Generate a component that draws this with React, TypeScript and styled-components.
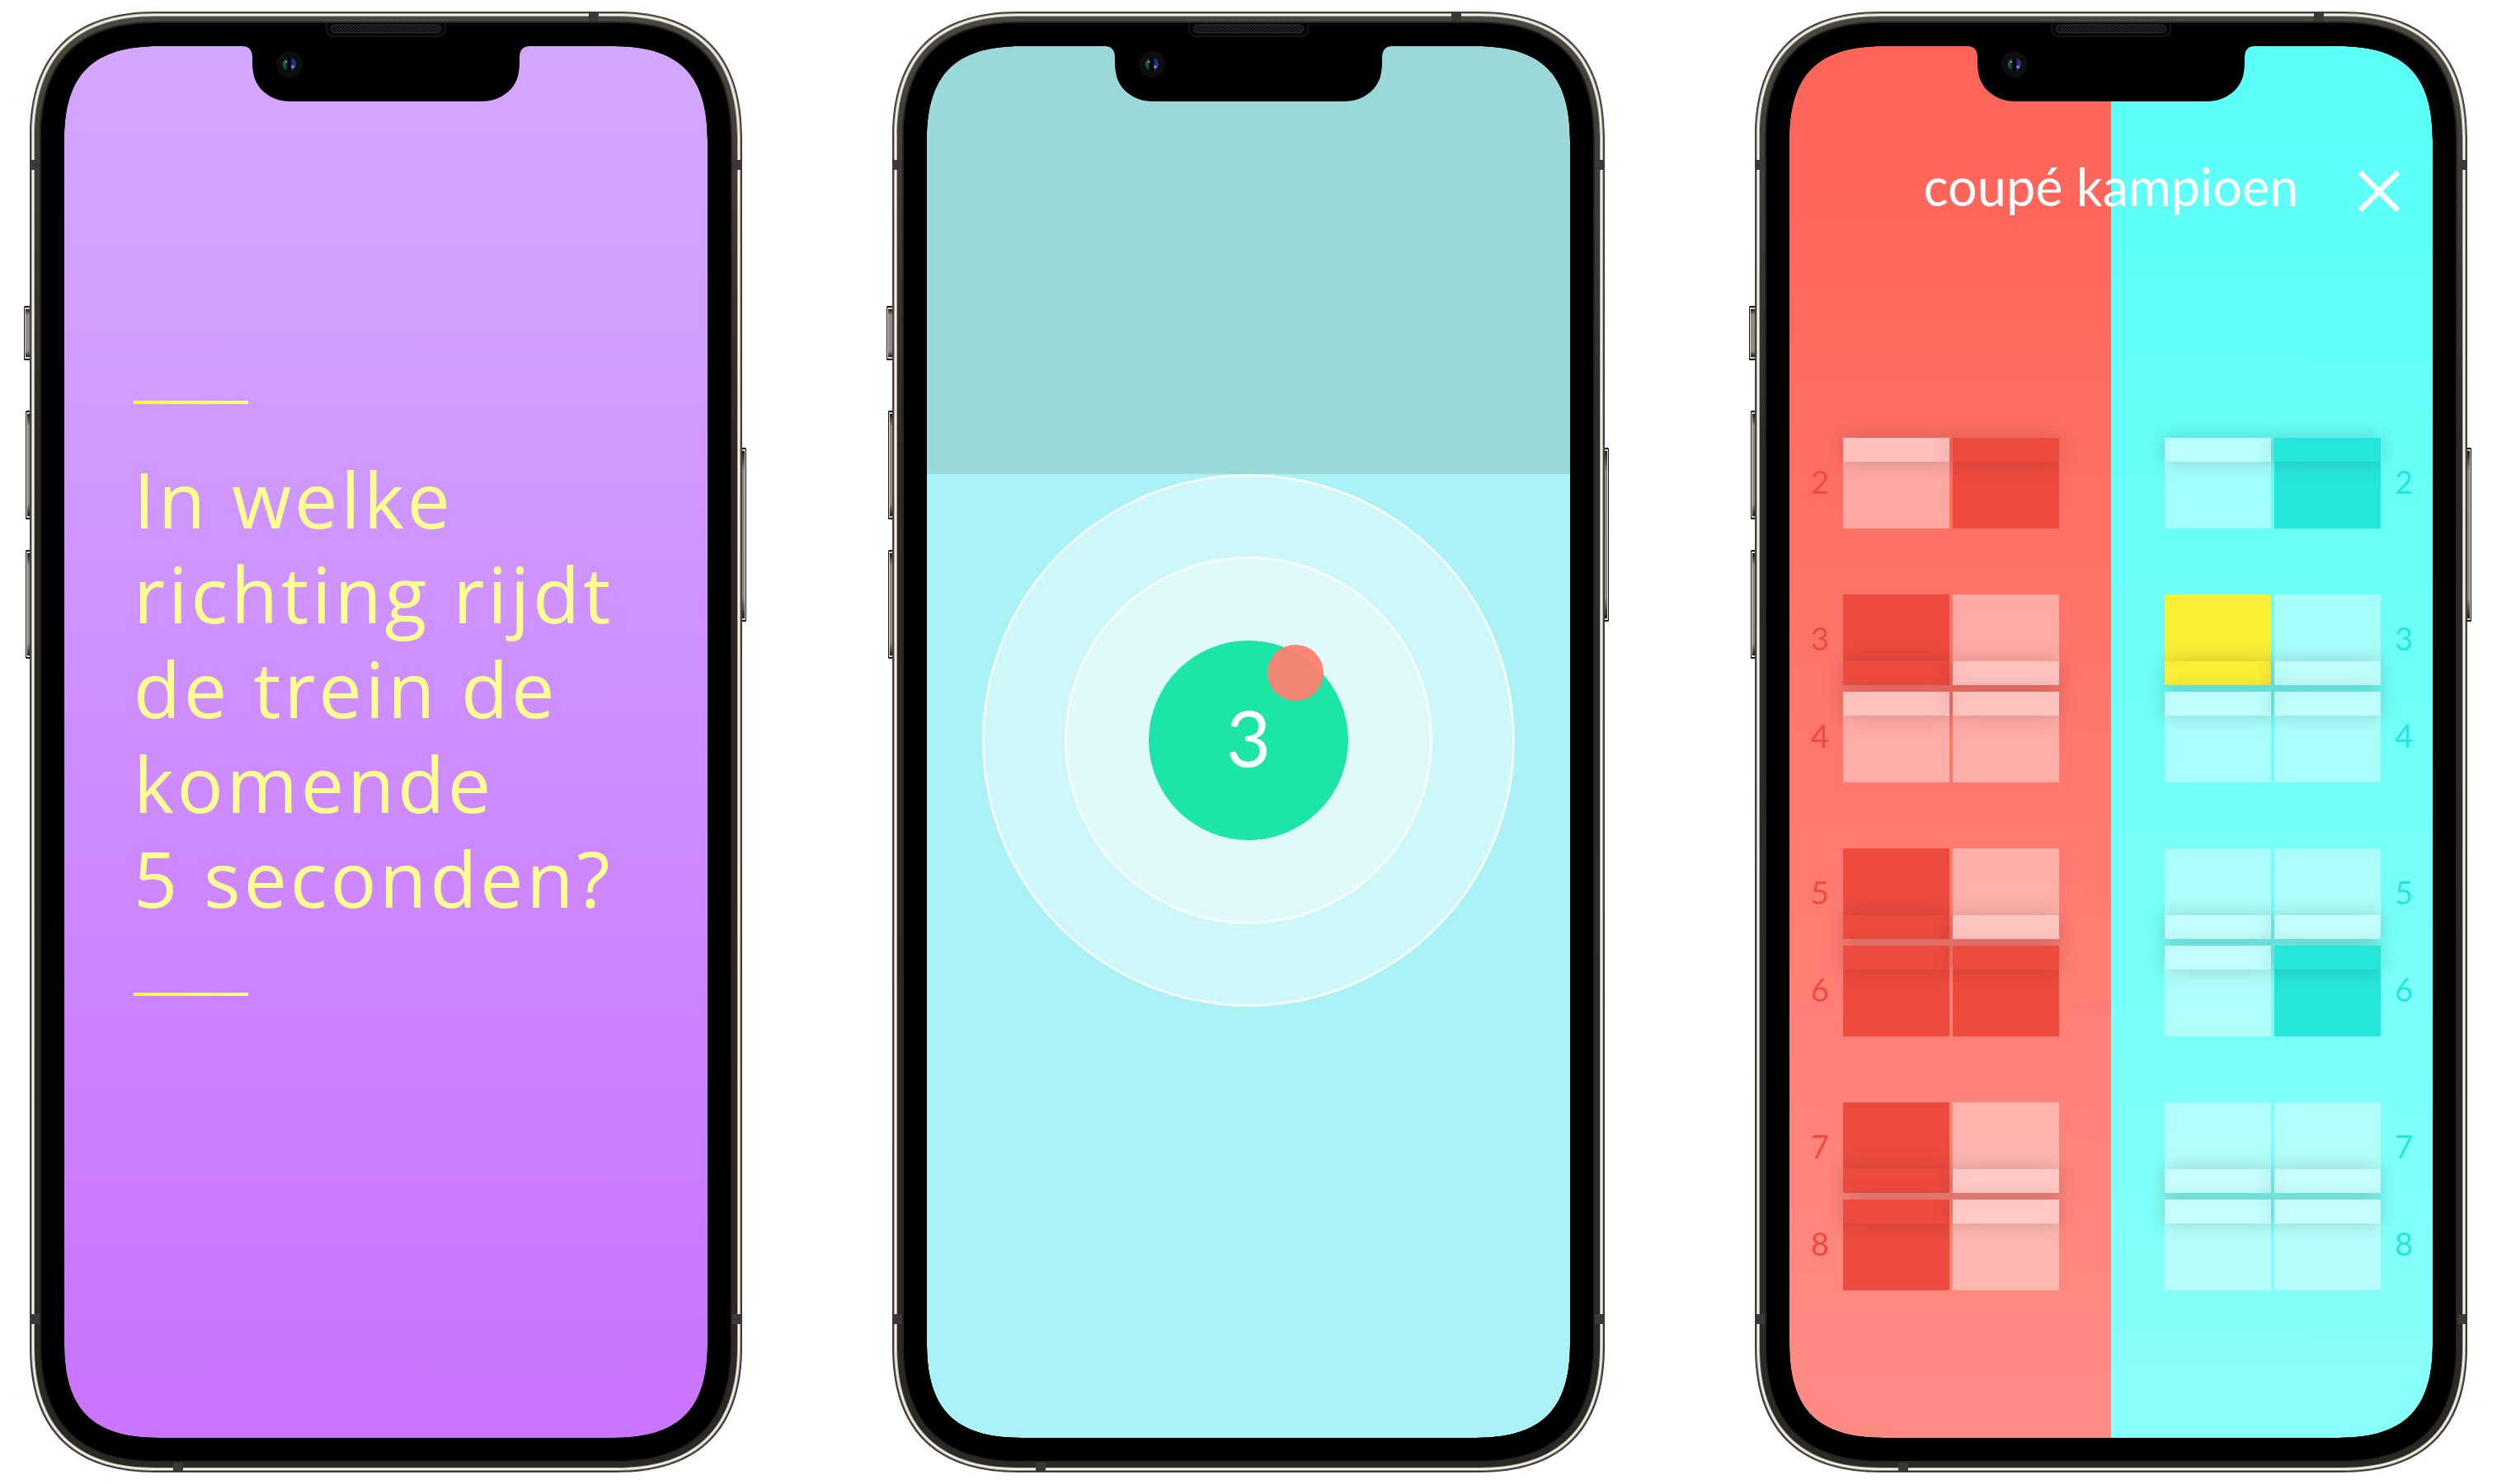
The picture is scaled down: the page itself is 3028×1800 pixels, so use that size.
import React from "react";
import styled, { createGlobalStyle, css } from "styled-components";

const GlobalStyle = createGlobalStyle`
  *, *::before, *::after { box-sizing: border-box; }
  body { margin: 0; background: #ffffff; }
`;

const Page = styled.main`
  display: flex;
  justify-content: space-between;
  gap: 182px;
  padding: 14px 36px;
`;

/* ---------- device ---------- */

const Device = styled.section`
  position: relative;
  display: flex;
  flex: 1 1 0;
  min-width: 0;
  aspect-ratio: 864 / 1772;
  padding: 42px;
`;

const Screen = styled.div`
  display: flex;
  flex: 1;
  flex-direction: column;
  min-width: 0;
  overflow: hidden;
  border-radius: 88px;
`;

const Hardware = styled.svg`
  position: absolute;
  inset: 0;
  width: 100%;
  height: 100%;
  overflow: visible;
  pointer-events: none;
`;

const W = 864;
const H = 1772;

/* Continuous-curvature rounded rectangle, inset from the device outline. */
function outline(inset: number): string {
  const reach = 152 - inset * 0.9;
  const pull = (8 * (38.5 - inset * 0.27) - reach) / 3;
  const l = inset;
  const t = inset;
  const r = W - inset;
  const b = H - inset;
  return [
    `M${l} ${t + reach}`,
    `C${l} ${t + pull} ${l + pull} ${t} ${l + reach} ${t}`,
    `H${r - reach}`,
    `C${r - pull} ${t} ${r} ${t + pull} ${r} ${t + reach}`,
    `V${b - reach}`,
    `C${r} ${b - pull} ${r - pull} ${b} ${r - reach} ${b}`,
    `H${l + reach}`,
    `C${l + pull} ${b} ${l} ${b - pull} ${l} ${b - reach}`,
    "Z",
  ].join(" ");
}

const hole = outline(42);

const layers = [
  { inset: 0, fill: "url(#rim)" },
  { inset: 2, fill: "#a9a79d" },
  { inset: 3, fill: "#f7f0e8" },
  { inset: 5, fill: "#b0aca2" },
  { inset: 6, fill: "url(#band)" },
  { inset: 12, fill: "#242422" },
  { inset: 14, fill: "#000000" },
];

function SideKey({ x, y, width, height, flip }: { x: number; y: number; width: number; height: number; flip?: boolean }) {
  return (
    <g>
      <rect x={x} y={y} width={width} height={height} rx={1.5} fill="#1b1b19" />
      <rect x={flip ? x : x + 1} y={y + 2} width={width - 1} height={height - 4} fill="#d8d6cd" />
      <rect x={flip ? x : x + 2} y={y + 4} width={width - 2} height={height - 8} fill="url(#key)" />
    </g>
  );
}

function PhoneHardware() {
  return (
    <Hardware viewBox={`0 0 ${W} ${H}`} aria-hidden="true">
      <defs>
        <linearGradient id="rim" x1="0" y1="0" x2="0" y2="1">
          <stop offset="0" stopColor="#45453f" />
          <stop offset="1" stopColor="#3c3b37" />
        </linearGradient>
        <linearGradient id="band" x1="0" y1="0" x2="0" y2="1">
          <stop offset="0" stopColor="#484740" />
          <stop offset="0.3" stopColor="#2b2a25" />
          <stop offset="1" stopColor="#2a2924" />
        </linearGradient>
        <linearGradient id="key" x1="0" y1="0" x2="0" y2="1">
          <stop offset="0" stopColor="#1b1b19" />
          <stop offset="0.12" stopColor="#8d8c85" />
          <stop offset="0.88" stopColor="#8d8c85" />
          <stop offset="1" stopColor="#1b1b19" />
        </linearGradient>
        <pattern id="mesh" width="4" height="4" patternUnits="userSpaceOnUse">
          <rect width="4" height="4" fill="#101010" />
          <rect width="2" height="2" fill="#222222" />
          <rect x="2" y="2" width="2" height="2" fill="#222222" />
        </pattern>
        <linearGradient id="lens" x1="0" y1="0" x2="1" y2="0">
          <stop offset="0" stopColor="#2b6d68" />
          <stop offset="0.3" stopColor="#0b2b2c" />
          <stop offset="0.36" stopColor="#000000" />
          <stop offset="0.58" stopColor="#02040d" />
          <stop offset="0.68" stopColor="#0f2d83" />
          <stop offset="1" stopColor="#303a70" />
        </linearGradient>
      </defs>

      <SideKey x={-7} y={357} width={8} height={66} />
      <SideKey x={-5} y={484} width={6} height={132} />
      <SideKey x={-5} y={653} width={6} height={132} />
      <SideKey x={863} y={529} width={6} height={211} flip />

      {layers.map((layer) => (
        <path key={layer.inset} d={`${outline(layer.inset)} ${hole}`} fillRule="evenodd" fill={layer.fill} />
      ))}

      <g fill="#3d3837">
        <rect x="0" y="180" width="12" height="12" />
        <rect x="852" y="180" width="12" height="12" />
        <rect x="0" y="1580" width="12" height="12" />
        <rect x="852" y="1580" width="12" height="12" />
        <rect x="678" y="0" width="12" height="12" />
        <rect x="174" y="1760" width="12" height="12" />
      </g>

      <path
        d="M258 40 V42 C266 42 270 47 270 56 C270 64 270 68 271 73 C273 93 292 109 316 109 H548 C572 109 591 93 593 73 C594 68 594 64 594 56 C594 47 598 42 606 42 V40Z"
        fill="#000000"
      />
      <path d="M359 13 Q360 14 360 16 V20 Q360 30 370 30 H494 Q504 30 504 20 V16 Q504 14 505 13" fill="none" stroke="#1c1c1c" strokeWidth="1.5" />
      <rect x="365" y="16" width="134" height="10" rx="5" fill="url(#mesh)" stroke="#2c2c2c" />
      <circle cx="315" cy="64" r="16" fill="#0d0d0d" />
      <circle cx="315" cy="64" r="8" fill="url(#lens)" />
      <circle cx="311" cy="61" r="1.2" fill="#57c3c4" />
      <circle cx="319" cy="67" r="1.8" fill="#a083c8" />
    </Hardware>
  );
}

/* ---------- question screen ---------- */

const QuestionScreen = styled(Screen)`
  gap: 56px;
  padding: 430px 84px 0;
  background: linear-gradient(180deg, #d4a7ff 0%, #d3a4ff 8%, #c976ff 92%, #c975ff 100%);
`;

const Rule = styled.hr`
  width: 139px;
  height: 4px;
  margin: 0;
  border: 0;
  background: linear-gradient(90deg, #fff848 0%, #ffff8c 100%);
`;

const Question = styled.h1`
  margin: 0;
  padding: 2px 0 25px;
  color: #ffff90;
  font: 400 93px/115px "Open Sans", "Noto Sans", sans-serif;
  letter-spacing: 4px;
`;

/* ---------- countdown screen ---------- */

const CountdownScreen = styled(Screen)`
  align-items: center;
  background: #aaf2f5;
`;

const Shade = styled.div`
  flex: none;
  align-self: stretch;
  height: 519px;
  background: #9bd8da;
`;

const Ring = styled.div<{ $size: number; $fill: string }>`
  display: flex;
  flex: none;
  align-items: center;
  justify-content: center;
  width: ${(p) => p.$size}px;
  height: ${(p) => p.$size}px;
  border: 3px solid rgba(255, 255, 255, 0.75);
  border-radius: 50%;
  background: ${(p) => p.$fill};
`;

const Counter = styled.div`
  position: relative;
  display: flex;
  align-items: center;
  justify-content: center;
  width: 242px;
  height: 242px;
  padding-bottom: 8px;
  border-radius: 50%;
  background: #1de5a8;
  color: #ffffff;
  font: 400 94px/112px Lato, "Open Sans", sans-serif;
`;

const Dot = styled.span`
  position: absolute;
  top: 5px;
  right: 30px;
  width: 68px;
  height: 68px;
  border-radius: 50%;
  background: rgba(255, 126, 112, 0.94);
`;

/* ---------- seats screen ---------- */

type Side = "left" | "right";
type SeatState = "free" | "taken" | "mine";

const SeatsScreen = styled(Screen)`
  background:
    linear-gradient(180deg, #ff6459 0%, #ff665b 12%, #ff8a81 94%, #ff8b82 100%) left / 50% 100% no-repeat,
    linear-gradient(180deg, #5bfff7 0%, #5dfff7 12%, #86fffa 94%, #88fffa 100%) right / 50% 100% no-repeat;
`;

const TitleBar = styled.header`
  display: grid;
  grid-template-columns: 1fr auto 1fr;
  align-items: center;
  padding: 134px 39px 0;
`;

const Title = styled.h1`
  grid-column: 2;
  margin: 0;
  color: #ffffff;
  font: 400 63px/72px Lato, "Open Sans", sans-serif;
`;

const CloseButton = styled.button`
  justify-self: end;
  display: flex;
  padding: 12px 0 0;
  border: 0;
  background: none;
  color: #ffffff;
  cursor: pointer;
`;

const Carriage = styled.div`
  display: grid;
  grid-template-columns: 1fr 1fr;
  padding-top: 269px;
`;

const Half = styled.div<{ $side: Side }>`
  display: flex;
  flex-direction: column;
  gap: 80px;
  padding-left: ${(p) => (p.$side === "left" ? 21 : 65)}px;
  --taken: ${(p) => (p.$side === "left" ? "#ee4b3e" : "#26e6da")};
`;

const Group = styled.div`
  display: flex;
  flex-direction: column;
  gap: 8px;
`;

const SeatRow = styled.div<{ $side: Side }>`
  display: flex;
  flex-direction: ${(p) => (p.$side === "left" ? "row" : "row-reverse")};
  justify-content: ${(p) => (p.$side === "left" ? "flex-start" : "flex-end")};
  align-items: center;
  gap: 12px;
`;

const RowNumber = styled.span`
  width: 32px;
  padding-bottom: 4px;
  color: var(--taken);
  font: 400 38px/46px Lato, "Open Sans", sans-serif;
  text-align: center;
`;

const Pair = styled.div`
  display: flex;
  gap: 4px;
`;

const seatFill = {
  free: css`
    --cushion: rgba(255, 255, 255, 0.4);
    --back: rgba(255, 255, 255, 0.56);
  `,
  taken: css`
    --cushion: var(--taken);
    --back: var(--taken);
  `,
  mine: css`
    --cushion: #fbef36;
    --back: #fbef36;
  `,
};

const Seat = styled.button<{ $state: SeatState; $facing: "up" | "down" }>`
  ${(p) => seatFill[p.$state]}
  display: flex;
  flex-direction: ${(p) => (p.$facing === "down" ? "column" : "column-reverse")};
  width: 129px;
  height: 110px;
  padding: 0;
  border: 0;
  background: none;
  cursor: pointer;
`;

const Backrest = styled.span`
  z-index: 1;
  flex: none;
  align-self: stretch;
  height: 29px;
  background: var(--back);
  box-shadow: 0 0 24px rgba(40, 40, 40, 0.22);
`;

const Cushion = styled.span`
  flex: 1;
  align-self: stretch;
  background: var(--cushion);
`;

interface RowData {
  number: number;
  facing: "up" | "down";
  left: [SeatState, SeatState];
  right: [SeatState, SeatState];
}

const groups: RowData[][] = [
  [{ number: 2, facing: "down", left: ["free", "taken"], right: ["free", "taken"] }],
  [
    { number: 3, facing: "up", left: ["taken", "free"], right: ["mine", "free"] },
    { number: 4, facing: "down", left: ["free", "free"], right: ["free", "free"] },
  ],
  [
    { number: 5, facing: "up", left: ["taken", "free"], right: ["free", "free"] },
    { number: 6, facing: "down", left: ["taken", "taken"], right: ["free", "taken"] },
  ],
  [
    { number: 7, facing: "up", left: ["taken", "free"], right: ["free", "free"] },
    { number: 8, facing: "down", left: ["taken", "free"], right: ["free", "free"] },
  ],
];

function SeatColumn({ side }: { side: Side }) {
  return (
    <Half $side={side}>
      {groups.map((rows) => (
        <Group key={rows[0].number}>
          {rows.map((row) => (
            <SeatRow key={row.number} $side={side}>
              <RowNumber>{row.number}</RowNumber>
              <Pair>
                {row[side].map((state, i) => (
                  <Seat
                    key={i}
                    type="button"
                    $state={state}
                    $facing={row.facing}
                    disabled={state === "taken"}
                    aria-pressed={state === "mine"}
                    aria-label={`Rij ${row.number}, stoel ${i + 1}`}
                  >
                    <Backrest />
                    <Cushion />
                  </Seat>
                ))}
              </Pair>
            </SeatRow>
          ))}
        </Group>
      ))}
    </Half>
  );
}

export default function App() {
  return (
    <>
      <GlobalStyle />
      <Page>
        <Device>
          <QuestionScreen>
            <Rule />
            <Question>
              In welke
              <br />
              richting rijdt
              <br />
              de trein de
              <br />
              komende
              <br />5 seconden?
            </Question>
            <Rule />
          </QuestionScreen>
          <PhoneHardware />
        </Device>

        <Device>
          <CountdownScreen>
            <Shade />
            <Ring $size={646} $fill="#cdf7f8">
              <Ring $size={446} $fill="#e0fafc">
                <Counter>
                  3
                  <Dot />
                </Counter>
              </Ring>
            </Ring>
          </CountdownScreen>
          <PhoneHardware />
        </Device>

        <Device>
          <SeatsScreen>
            <TitleBar>
              <Title>coupé kampioen</Title>
              <CloseButton type="button" aria-label="Sluiten">
                <svg width="52" height="52" viewBox="0 0 52 52" fill="none" stroke="currentColor" strokeWidth="6.5">
                  <path d="M3 3 L49 49 M49 3 L3 49" />
                </svg>
              </CloseButton>
            </TitleBar>
            <Carriage>
              <SeatColumn side="left" />
              <SeatColumn side="right" />
            </Carriage>
          </SeatsScreen>
          <PhoneHardware />
        </Device>
      </Page>
    </>
  );
}
